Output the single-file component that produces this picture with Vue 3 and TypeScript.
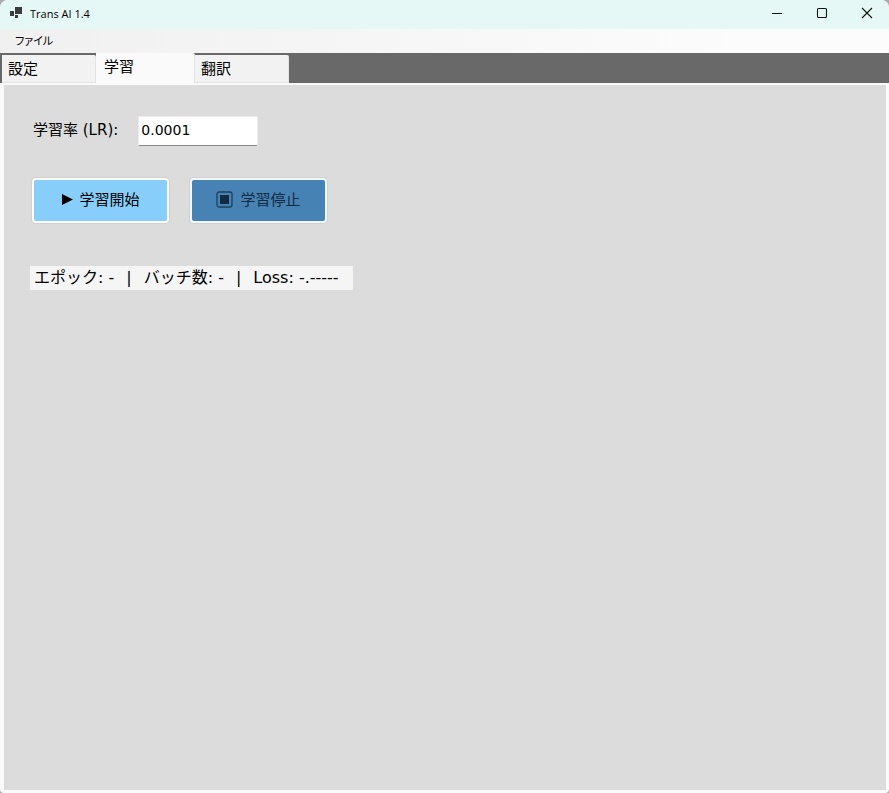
<script setup lang="ts">
import { ref } from 'vue'

interface Tab {
  id: string
  label: string
}

const tabs: Tab[] = [
  { id: 'settings', label: '設定' },
  { id: 'training', label: '学習' },
  { id: 'translate', label: '翻訳' },
]
const activeTab = ref('training')
const learningRate = ref('0.0001')
const running = ref(false)
</script>

<template>
  <div class="window">
    <header class="titlebar">
      <svg class="app-icon" width="13" height="12" viewBox="0 0 13 12" aria-hidden="true">
        <path d="M5 0h7v7H5z" fill="#3b3d3e" />
        <path d="M0 4h4v5H0z" fill="#3b3d3e" />
        <path d="M5 8h3v3H5z" fill="#3b3d3e" />
      </svg>
      <h1 class="title">Trans AI 1.4</h1>
      <div class="controls">
        <button type="button" aria-label="最小化">
          <svg width="12" height="12" viewBox="0 0 12 12"><path d="M1 6.5h10" /></svg>
        </button>
        <button type="button" aria-label="最大化">
          <svg width="12" height="12" viewBox="0 0 12 12"><rect x="1.5" y="1.5" width="9" height="9" rx="1" /></svg>
        </button>
        <button type="button" aria-label="閉じる">
          <svg width="12" height="12" viewBox="0 0 12 12"><path d="M1 1l10 10M11 1L1 11" /></svg>
        </button>
      </div>
    </header>

    <nav class="menubar">
      <button type="button">ファイル</button>
    </nav>

    <div class="tabs" role="tablist">
      <button
        v-for="tab in tabs"
        :key="tab.id"
        type="button"
        role="tab"
        class="tab"
        :class="{ active: tab.id === activeTab }"
        :aria-selected="tab.id === activeTab"
        @click="activeTab = tab.id"
      >
        {{ tab.label }}
      </button>
    </div>

    <main class="page">
      <div class="panel">
        <div class="field">
          <label for="lr">学習率 (LR):</label>
          <input id="lr" v-model="learningRate" type="text" />
        </div>
        <div class="actions">
          <button type="button" class="action start" :disabled="running" @click="running = true">
            <svg width="12" height="12" viewBox="0 0 12 12" aria-hidden="true"><path d="M1 0l11 5.5L1 11z" fill="#000" /></svg>
            <span>学習開始</span>
          </button>
          <button type="button" class="action stop" :disabled="!running" @click="running = false">
            <svg width="17" height="17" viewBox="0 0 17 17" aria-hidden="true">
              <rect x="1" y="1" width="15" height="15" rx="2" fill="none" stroke="#1e3f5c" stroke-width="1.3" />
              <path d="M4 4h9v9H4z" fill="#132a40" />
            </svg>
            <span>学習停止</span>
          </button>
        </div>
        <output class="status">
          <span>エポック: -</span><span>|</span><span>バッチ数: -</span><span>|</span><span>Loss: -.-----</span>
        </output>
      </div>
    </main>
  </div>
</template>

<style>
body {
  background: #a9acac;
}
</style>

<style scoped>
.window {
  display: flex;
  flex-direction: column;
  min-height: 100vh;
  overflow: hidden;
  border-radius: 8px 8px 4px 4px;
  background: #fafafa;
  color: #000;
  font-family: "DejaVu Sans", "Noto Sans CJK JP", sans-serif;
  font-size: 15px;
  line-height: 24px;
}
button,
input {
  font: inherit;
  color: inherit;
}
button {
  margin: 0;
  padding: 0;
  border: 0;
  background: none;
}
.titlebar {
  display: flex;
  align-items: flex-start;
  height: 29px;
  background: #e5f8f6;
}
.app-icon {
  margin: 7px 7px 0 10px;
}
.title {
  flex: 1;
  margin: 0;
  font-family: "Open Sans", sans-serif;
  font-size: 11px;
  font-weight: 400;
  line-height: 28px;
}
.controls {
  display: flex;
}
.controls button {
  display: flex;
  align-items: center;
  justify-content: center;
  width: 45px;
  height: 26px;
}
.controls svg {
  fill: none;
  stroke: #111;
  stroke-width: 1.1;
}
.menubar {
  display: flex;
  height: 24px;
  padding-left: 15px;
  background: linear-gradient(90deg, #f0f0f0, #fcfcfc 85%);
}
.menubar button {
  padding-bottom: 2px;
  font-family: "Noto Sans CJK JP", sans-serif;
  font-size: 11px;
  line-height: 22px;
  font-feature-settings: "palt";
}
.tabs {
  display: flex;
  align-items: flex-end;
  height: 30px;
  padding-left: 2px;
  background: #696969;
}
.tab {
  box-sizing: border-box;
  width: 94px;
  height: 28px;
  padding: 0 6px;
  border: solid #e3e3e3;
  border-width: 0 1px 1px 0;
  border-radius: 0 2px 0 0;
  background: #f2f2f2;
  text-align: left;
}
.tab.active {
  width: 99px;
  height: 30px;
  padding: 0 8px 2px;
  border-bottom: 0;
  background: #fafafa;
}
.page {
  display: flex;
  flex: 1;
  padding: 2px 3px 3px 4px;
}
.panel {
  display: flex;
  flex: 1;
  flex-direction: column;
  align-items: flex-start;
  padding: 31px 26px;
  background: #dcdcdc;
}
.field {
  display: flex;
  align-items: center;
  gap: 20px;
  padding-left: 3px;
}
.field label {
  padding-bottom: 2px;
}
.field input {
  box-sizing: border-box;
  width: 120px;
  height: 30px;
  padding: 0 2px 2px;
  border: 1px solid #ececec;
  border-bottom-color: #868686;
  border-radius: 2px;
  outline: 0;
  background: #fff;
  font-size: 14px;
}
.actions {
  display: flex;
  gap: 21px;
  padding: 32px 0 42px 2px;
}
.action {
  display: flex;
  box-sizing: border-box;
  align-items: center;
  justify-content: center;
  width: 137px;
  height: 45px;
  margin-bottom: 1px;
  padding-bottom: 2px;
  border: 2px solid #fdfdfd;
  border-radius: 4px;
  box-shadow: 0 0 1px 1px #d0d0d0;
}
.start {
  gap: 6px;
  background: #87cefa;
}
.stop {
  gap: 7px;
  border-color: #f0f8fc;
  background: #4682b4;
  color: #132a40;
}
.status {
  display: flex;
  gap: 12px;
  padding: 0 14px 0 4px;
  background: #f5f5f5;
  font-size: 16px;
}
</style>
